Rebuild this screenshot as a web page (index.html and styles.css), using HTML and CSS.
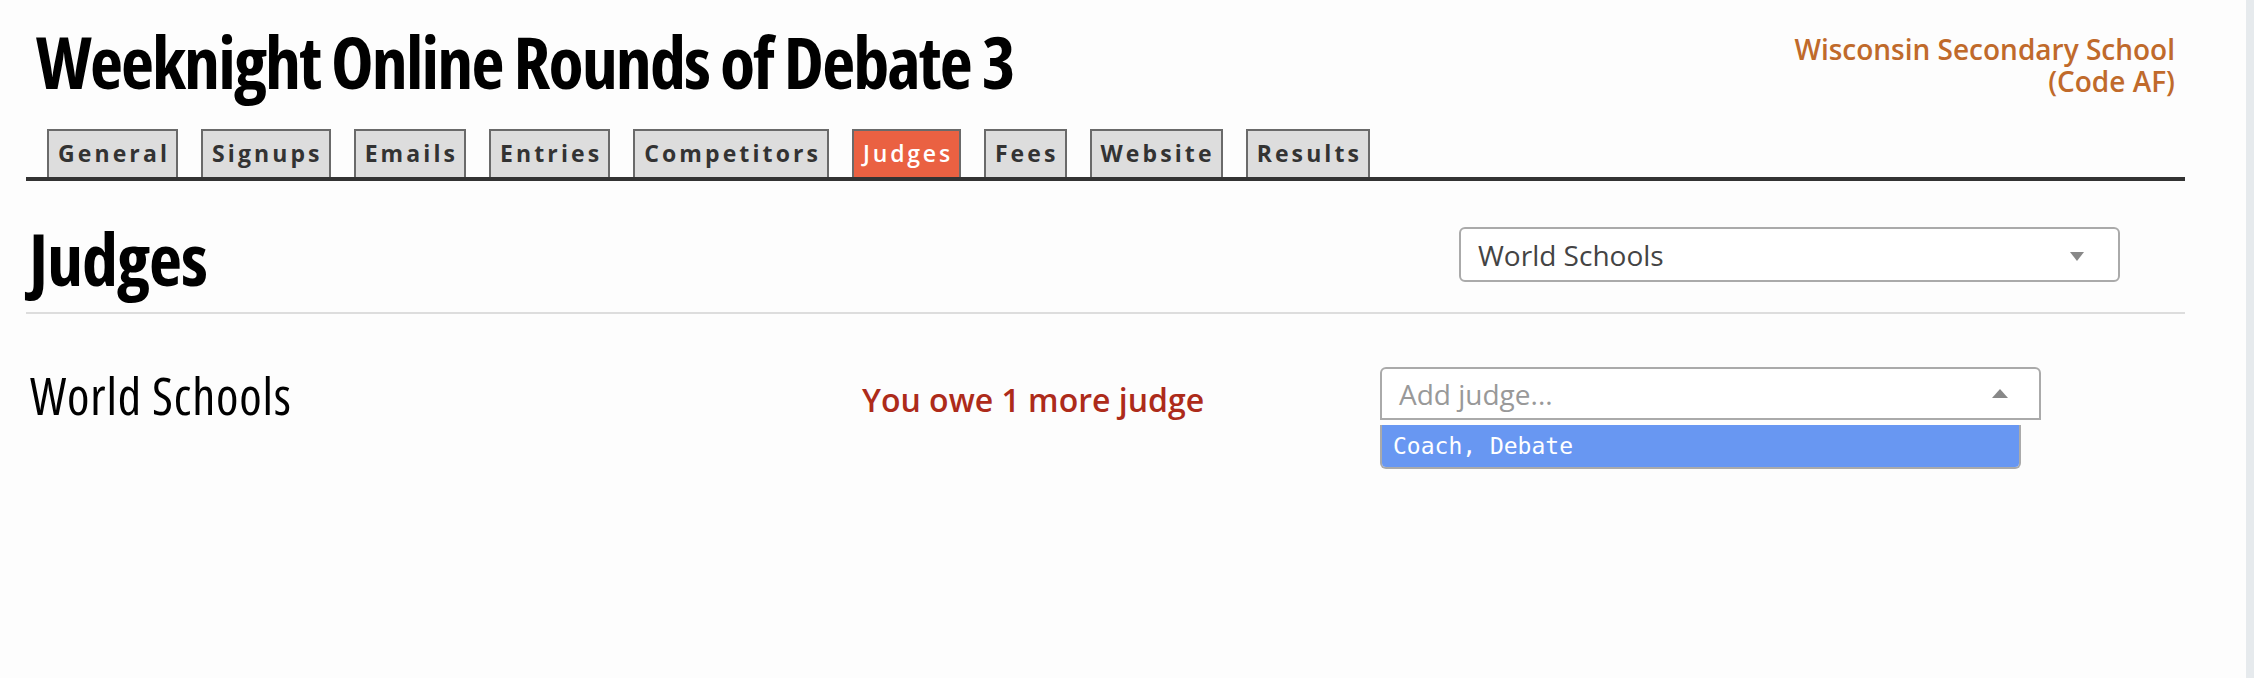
FILE: index.html
```html
<!DOCTYPE html>
<html>

<head>
  <title>Judges - Weeknight Online Rounds of Debate 3</title>
  <link rel="stylesheet" href="styles.css">
</head>

<body>
  <div class="page">
    <main class="main">
      <header class="top">
        <h1 class="title">Weeknight Online Rounds of Debate 3</h1>
        <div class="school">
          <div>Wisconsin Secondary School</div>
          <div>(Code AF)</div>
        </div>
      </header>

      <nav class="tabs">
        <a class="tab" href="#">General</a>
        <a class="tab" href="#">Signups</a>
        <a class="tab" href="#">Emails</a>
        <a class="tab" href="#">Entries</a>
        <a class="tab" href="#">Competitors</a>
        <a class="tab active" href="#">Judges</a>
        <a class="tab" href="#">Fees</a>
        <a class="tab" href="#">Website</a>
        <a class="tab" href="#">Results</a>
      </nav>

      <div class="section-head">
        <h2>Judges</h2>
        <div class="select event-select">
          <span class="value">World Schools</span>
          <span class="caret down"></span>
        </div>
      </div>

      <div class="event-row">
        <h3>World Schools</h3>
        <p class="owed">You owe 1 more judge</p>
        <div class="picker">
          <div class="select open">
            <span class="placeholder">Add judge...</span>
            <span class="caret up"></span>
          </div>
          <ul class="options">
            <li class="highlighted">Coach, Debate</li>
          </ul>
        </div>
      </div>
    </main>
    <div class="scrollbar"></div>
  </div>
</body>

</html>
```

FILE: styles.css
```css
:root {
  --dark: #333333;
  --tab-bg: #dddddd;
  --tab-border: #6a6a6a;
  --accent: #ea6142;
  --school: #c06a2b;
  --owed: #ad2b1a;
  --field-border: #aaaaaa;
  --highlight: #6897f2;
}

* {
  box-sizing: border-box;
  margin: 0;
  padding: 0;
}

body {
  font-family: 'Open Sans', 'Liberation Sans', sans-serif;
  background-color: #fdfdfd;
  color: var(--dark);
  height: 678px;
  overflow: hidden;
}

.page {
  display: flex;
  height: 100%;
}

.main {
  flex: 1;
  padding-left: 26px;
}

.scrollbar {
  width: 8px;
  background: #e6eaed;
}

/* condensed headings */
.title,
.section-head h2,
.event-row h3 {
  font-family: 'Open Sans', sans-serif;
  font-stretch: 75%;
  color: #000;
}

/* header */

.top {
  width: 2159px;
  display: flex;
  justify-content: space-between;
  align-items: flex-start;
  padding-top: 21px;
}

.title {
  font-size: 72px;
  line-height: 80px;
  font-weight: 700;
  letter-spacing: -1.9px;
  padding-left: 10px;
}

.school {
  margin-top: 12px;
  padding-right: 10px;
  text-align: right;
  font-size: 28px;
  line-height: 32px;
  font-weight: 600;
  color: var(--school);
}

/* tabs */

.tabs {
  width: 2159px;
  margin-top: 28px;
  display: flex;
  align-items: flex-end;
  gap: 23px;
  padding-left: 21px;
  border-bottom: 4px solid var(--dark);
}

.tab {
  display: block;
  padding: 6px 6px 6px 9px;
  line-height: 32px;
  font-size: 23px;
  font-weight: 700;
  letter-spacing: 3.1px;
  color: var(--dark);
  text-decoration: none;
  background: var(--tab-bg);
  border: 2px solid var(--tab-border);
  border-bottom: none;
  height: 48px;
}

.tab.active {
  background: var(--accent);
  color: #fff;
  font-weight: 600;
  letter-spacing: 2.8px;
}

/* section heading */

.section-head {
  width: 2159px;
  margin-top: 37px;
  display: flex;
  justify-content: space-between;
  align-items: flex-start;
  padding-bottom: 14px;
  border-bottom: 2px solid #dddddd;
}

.section-head h2 {
  font-size: 72px;
  line-height: 80px;
  font-weight: 700;
  letter-spacing: -1px;
  padding-left: 3px;
}

.select {
  width: 661px;
  display: flex;
  align-items: center;
  justify-content: space-between;
  background: #fff;
  border: 2px solid var(--field-border);
  border-radius: 6px;
  padding: 0 31px 0 17px;
  font-size: 28px;
}

.event-select {
  height: 55px;
  margin-top: 9px;
  margin-right: 65px;
  color: #444;
  padding-right: 34px;
}

.caret {
  width: 0;
  height: 0;
  border-left: 7px solid transparent;
  border-right: 7px solid transparent;
}

.caret.down {
  border-top: 9px solid #888;
  margin-top: 4px;
}

.caret.up {
  border-left-width: 8px;
  border-right-width: 8px;
  border-bottom: 9px solid #888;
}

/* event row */

.event-row {
  width: 2159px;
  margin-top: 53px;
  display: grid;
  grid-template-columns: 836px 518px 661px;
  align-items: start;
}

.event-row h3 {
  font-size: 51px;
  line-height: 56px;
  font-weight: 400;
  letter-spacing: 0.8px;
  padding-left: 4px;
}

.owed {
  margin-top: 13px;
  font-size: 32px;
  line-height: 40px;
  font-weight: 600;
  color: var(--owed);
}

.select.open {
  height: 53px;
  border-radius: 6px 6px 0 0;
  color: #999;
}

.options {
  list-style: none;
  width: 641px;
  margin-top: 5px;
  border: 2px solid var(--field-border);
  border-top: none;
  border-radius: 0 0 6px 6px;
  overflow: hidden;
}

.options li {
  font-family: 'DejaVu Sans Mono', 'Liberation Mono', monospace;
  font-size: 23px;
  line-height: 42px;
  padding-left: 11px;
  color: #fff;
}

.options li.highlighted {
  background: var(--highlight);
}
```
